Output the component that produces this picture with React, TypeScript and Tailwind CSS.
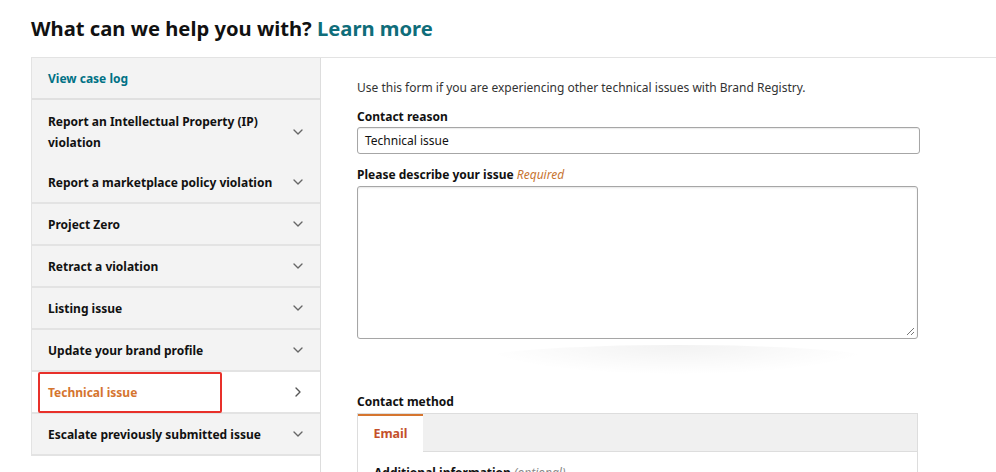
import { ChevronDown, ChevronRight } from "lucide-react"

const items = [
  { label: "Report an Intellectual Property (IP) violation", tall: true, noLine: true },
  { label: "Report a marketplace policy violation" },
  { label: "Project Zero" },
  { label: "Retract a violation" },
  { label: "Listing issue" },
  { label: "Update your brand profile" },
  { label: "Technical issue", active: true },
  { label: "Escalate previously submitted issue" },
]

function Sidebar() {
  return (
    <div className="w-[290px] shrink-0 border-r border-[#dddddd]">
      <div className="border-l border-[#e3e3e3] bg-[#f3f3f3]">
        <div className="flex h-[42px] items-center border-b-2 border-[#e0e0e0] px-4 pt-[1px] text-[12px] font-bold text-[#007185]">
          View case log
        </div>
        {items.map((item) => (
          <div
            key={item.label}
            className={
              (item.active ? "bg-white " : "bg-[#f3f3f3] ") +
              (item.noLine ? "" : "border-b-2 border-[#e3e3e3] ") +
              "relative flex items-center justify-between pl-4 pr-[14px] text-[12px] font-bold leading-[21px] whitespace-nowrap " +
              (item.tall ? "h-[62px] pt-[2px]" : "h-[42px]")
            }
          >
            <span className={item.active ? "text-[#d5752f]" : "text-[#111111]"}>
              {item.tall ? (
                <>
                  Report an Intellectual Property (IP)
                  <br />
                  violation
                </>
              ) : (
                item.label
              )}
            </span>
            {item.active ? (
              <ChevronRight className="h-4 w-4 text-[#555]" strokeWidth={2} />
            ) : (
              <ChevronDown className="h-4 w-4 text-[#666]" strokeWidth={2} />
            )}
            {item.active && (
              <div className="pointer-events-none absolute left-[6px] top-0 h-[41px] w-[184px] rounded-[2px] border-2 border-[#e8302a]" />
            )}
          </div>
        ))}
      </div>
    </div>
  )
}

function Form() {
  return (
    <div className="flex-1 pl-9 pt-[21px] text-[12px] text-[#333]">
      <p className="leading-[18px]">Use this form if you are experiencing other technical issues with Brand Registry.</p>

      <div className="mt-[12px] font-bold text-[#111] leading-[16px]">Contact reason</div>
      <div className="mt-[2px] flex h-[27px] w-[563px] items-center rounded-[3px] border border-[#a6a6a6] px-[7px] text-[12px] text-[#111] shadow-[inset_0_1px_1px_rgba(0,0,0,0.08)]">
        Technical issue
      </div>

      <div className="mt-[13px] leading-[16px]">
        <span className="font-bold text-[#111]">Please describe your issue</span>{" "}
        <span className="italic text-[#c7742f]">Required</span>
      </div>
      <div className="relative mt-[3px] h-[153px] w-[561px] rounded-[3px] border border-[#a6a6a6] shadow-[inset_0_1px_2px_rgba(0,0,0,0.1)]">
        <svg className="absolute bottom-[2px] right-[2px]" width="9" height="9" viewBox="0 0 9 9">
          <path d="M8 1 L1 8 M8 5 L5 8" stroke="#777" strokeWidth="1" fill="none" />
        </svg>
      </div>
      <div className="mx-auto mt-[6px] h-[30px] w-[400px] rounded-[50%] bg-[radial-gradient(ellipse_at_top,rgba(0,0,0,0.05),transparent_70%)]" />

      <div className="mt-[19px] font-bold text-[#111] leading-[16px]">Contact method</div>
      <div className="mt-[3px] w-[561px] border border-[#dddddd]">
        <div className="flex h-[38px] bg-[#f0f0f0]">
          <div className="flex w-[65px] items-center justify-center border-t-2 border-[#d5752f] bg-white text-[12.5px] font-bold text-[#c4502a]">
            Email
          </div>
          <div className="flex-1 border-b border-[#dddddd]" />
        </div>
        <div className="px-4 pt-[12px] pb-4 leading-[18px]">
          <span className="text-[12px] font-bold text-[#111]">Additional information</span>{" "}
          <span className="italic text-[#888]">(optional)</span>
        </div>
      </div>
    </div>
  )
}

export default function App() {
  return (
    <div className="h-[472px] w-[996px] overflow-hidden bg-white font-['Noto_Sans',sans-serif]">
      <h1 className="pl-[31px] pt-[12px] text-[20.2px] font-bold leading-[32px] text-[#111]">
        What can we help you with? <span className="text-[#0f6d7a]">Learn more</span>
      </h1>
      <div className="ml-[31px] mt-[13px] flex border-t border-[#e3e3e3]">
        <Sidebar />
        <Form />
      </div>
    </div>
  )
}
